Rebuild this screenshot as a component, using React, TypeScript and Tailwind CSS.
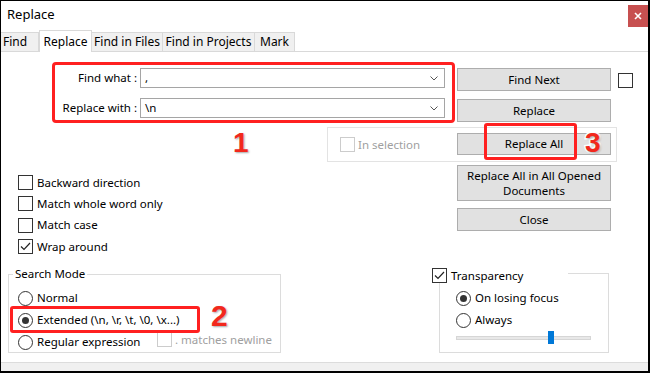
import React from 'react'

function Check() {
  return (
    <svg width="11" height="9" viewBox="0 0 11 9" fill="none">
      <path d="M1 4.5 L4 7.5 L10 1" stroke="#222" strokeWidth="1.2" />
    </svg>
  )
}

function Box({ checked, disabled }: { checked?: boolean; disabled?: boolean }) {
  return (
    <span
      className={`flex h-[15px] w-[15px] shrink-0 items-center justify-center border bg-white ${
        disabled ? 'border-[#cccccc]' : 'border-[#333333]'
      }`}
    >
      {checked && <Check />}
    </span>
  )
}

function Radio({ checked }: { checked?: boolean }) {
  return (
    <span className="flex h-[15px] w-[15px] shrink-0 items-center justify-center rounded-full border border-[#333333] bg-white">
      {checked && <span className="h-[7px] w-[7px] rounded-full bg-[#333333]" />}
    </span>
  )
}

function Btn({ children, className = '' }: { children: React.ReactNode; className?: string }) {
  return (
    <div className={`flex w-[154px] items-center justify-center border border-[#adadad] bg-[#e1e1e1] text-center ${className}`}>
      {children}
    </div>
  )
}

function Combo({ value }: { value: string }) {
  return (
    <div className="ml-[3px] flex h-[20px] w-[305px] items-center border border-[#a5a5a5] bg-white pl-[4px] pr-[6px]">
      <span className="flex-1">{value}</span>
      <svg width="8" height="5" viewBox="0 0 8 5" fill="none">
        <path d="M0.5 0.5 L4 4 L7.5 0.5" stroke="#555" strokeWidth="1" />
      </svg>
    </div>
  )
}

const num =
  "absolute font-['Liberation_Sans',Arial,sans-serif] font-bold leading-none text-[#f2281c] [-webkit-text-stroke:3px_white] [paint-order:stroke_fill] [text-shadow:1px_1px_2px_rgba(0,0,0,0.35)]"

export default function App() {
  return (
    <div className="flex h-[373px] w-[650px] flex-col overflow-hidden border-t border-r-2 border-b-2 border-l border-black bg-white font-['Noto_Sans',sans-serif] text-[11.5px] leading-[16px] text-black">
      {/* title bar */}
      <div className="flex h-[29px] shrink-0 items-start justify-between">
        <span className="pt-[4px] pl-[6px] text-[13px] leading-[18px]">Replace</span>
        <div className="mt-[4px] flex h-[22px] w-[20px] items-center justify-center bg-[#c75050]">
          <svg width="8" height="8" viewBox="0 0 8 8">
            <path d="M1 1 L7 7 M7 1 L1 7" stroke="white" strokeWidth="1.6" />
          </svg>
        </div>
      </div>

      {/* tabs */}
      <div className="flex h-[22px] shrink-0 items-end border-b border-[#d9d9d9] text-[12px]">
        <div className="flex h-[19px] w-[38px] items-center border-t border-r border-[#d9d9d9] bg-[#f0f0f0] pl-[2px]">Find</div>
        <div className="-mb-px flex h-[22px] w-[53px] items-center justify-center border-x border-t border-[#d9d9d9] bg-white">Replace</div>
        <div className="flex h-[19px] w-[71px] items-center justify-center border-t border-r border-[#d9d9d9] bg-[#f0f0f0]">Find in Files</div>
        <div className="flex h-[19px] w-[92px] items-center justify-center border-t border-r border-[#d9d9d9] bg-[#f0f0f0]">Find in Projects</div>
        <div className="flex h-[19px] w-[40px] items-center justify-center border-t border-r border-[#d9d9d9] bg-[#f0f0f0]">Mark</div>
      </div>

      <div className="flex flex-1 flex-col">
        {/* find / replace fields */}
        <div className="flex h-[71px] items-start pt-[10px]">
          <div className="ml-[51px] flex h-[61px] w-[403px] flex-col rounded-[4px] border-[3px] border-[#ff2020] pt-[3px]">
            <div className="flex h-[20px] items-center">
              <span className="w-[82px] text-right">Find what :</span>
              <Combo value="," />
            </div>
            <div className="mt-[10px] flex h-[20px] items-center">
              <span className="w-[82px] text-right">Replace with :</span>
              <Combo value="\n" />
            </div>
          </div>
          <div className="ml-[2px] flex flex-col">
            <Btn className="mt-[6px] h-[23px]">Find Next</Btn>
            <Btn className="mt-[8px] h-[23px]">Replace</Btn>
          </div>
          <div className="mt-[11px] ml-[7px]">
            <Box />
          </div>
        </div>

        {/* in selection */}
        <div className="relative flex h-[39px]">
          <span className={`${num} top-[6px] left-[232px] text-[28px]`}>1</span>
          <div className="relative mt-[4px] ml-[326px] flex h-[35px] w-[290px] items-start border border-[#e3e3e3]">
            <div className="mt-[9px] ml-[12px] flex h-[15px] items-center gap-[3px]">
              <Box disabled />
              <span className="text-[#a0a0a0]">In selection</span>
            </div>
            <Btn className="mt-[5px] mr-[5px] ml-auto h-[22px] border-[#0078d7]">Replace All</Btn>
            <div className="absolute -top-[5px] left-[156px] h-[37px] w-[93px] rounded-[3px] border-[3px] border-[#ff2020]" />
            <span className={`${num} top-[1px] left-[257px] text-[28px]`}>3</span>
          </div>
        </div>

        {/* options */}
        <div className="flex h-[100px]">
          <div className="flex w-[456px] flex-col pt-[10px] pl-[17px]">
            {[
              ['Backward direction', false],
              ['Match whole word only', false],
              ['Match case', false],
              ['Wrap around', true],
            ].map(([label, on]) => (
              <div key={label as string} className="flex h-[21.33px] items-center gap-[4px]">
                <Box checked={on as boolean} />
                <span>{label}</span>
              </div>
            ))}
          </div>
          <div className="flex flex-col">
            <Btn className="mt-[3px] h-[36px] flex-col leading-[15px]">
              <span>Replace All in All Opened</span>
              <span>Documents</span>
            </Btn>
            <Btn className="mt-[7px] h-[23px]">Close</Btn>
          </div>
        </div>

        {/* search mode + transparency */}
        <div className="flex h-[100px] items-start">
          <div className="relative mt-[12px] ml-[7px] flex h-[79px] w-[273px] flex-col border border-[#dcdcdc]">
            <span className="-mt-[9px] ml-[4px] h-[16px] self-start bg-white px-[2px]">Search Mode</span>
            <div className="mt-[5px] flex flex-col pl-[9px]">
              <div className="flex h-[22px] items-center gap-[4px]">
                <Radio />
                <span>Normal</span>
              </div>
              <div className="flex h-[22px] items-center gap-[4px]">
                <Radio checked />
                <span>Extended (\n, \r, \t, \0, \x...)</span>
              </div>
              <div className="flex h-[22px] items-center">
                <div className="flex w-[139px] items-center gap-[4px]">
                  <Radio />
                  <span>Regular expression</span>
                </div>
                <div className="mb-[5px] flex items-center gap-[3px]">
                  <Box disabled />
                  <span className="text-[#a0a0a0]">. matches newline</span>
                </div>
              </div>
            </div>
            <div className="absolute top-[31px] left-[1px] h-[27px] w-[190px] rounded-[3px] border-[3px] border-[#ff2020]" />
            <span className={`${num} top-[26px] left-[202px] text-[30px]`}>2</span>
          </div>

          <div className="mt-[11px] ml-[158px] flex h-[80px] w-[170px] flex-col border border-[#dcdcdc]">
            <div className="-mt-[6px] -ml-[8px] flex h-[15px] w-[136px] items-center gap-[4px] bg-white">
              <Box checked />
              <span>Transparency</span>
            </div>
            <div className="mt-[4px] flex flex-col pl-[16px]">
              <div className="flex h-[22px] items-center gap-[4px]">
                <Radio checked />
                <span>On losing focus</span>
              </div>
              <div className="flex h-[22px] items-center gap-[4px]">
                <Radio />
                <span>Always</span>
              </div>
              <div className="relative flex h-[14px] w-[135px] items-center">
                <div className="h-[4px] w-full border border-[#d6d6d6] bg-[#e8e8e8]" />
                <div className="absolute top-0 left-[92px] h-[13px] w-[6px] bg-[#0078d7]" />
              </div>
            </div>
          </div>
        </div>
      </div>

      <div className="h-[9px] shrink-0 border-t border-[#dcdcdc] bg-[#f0f0f0]" />
    </div>
  )
}
